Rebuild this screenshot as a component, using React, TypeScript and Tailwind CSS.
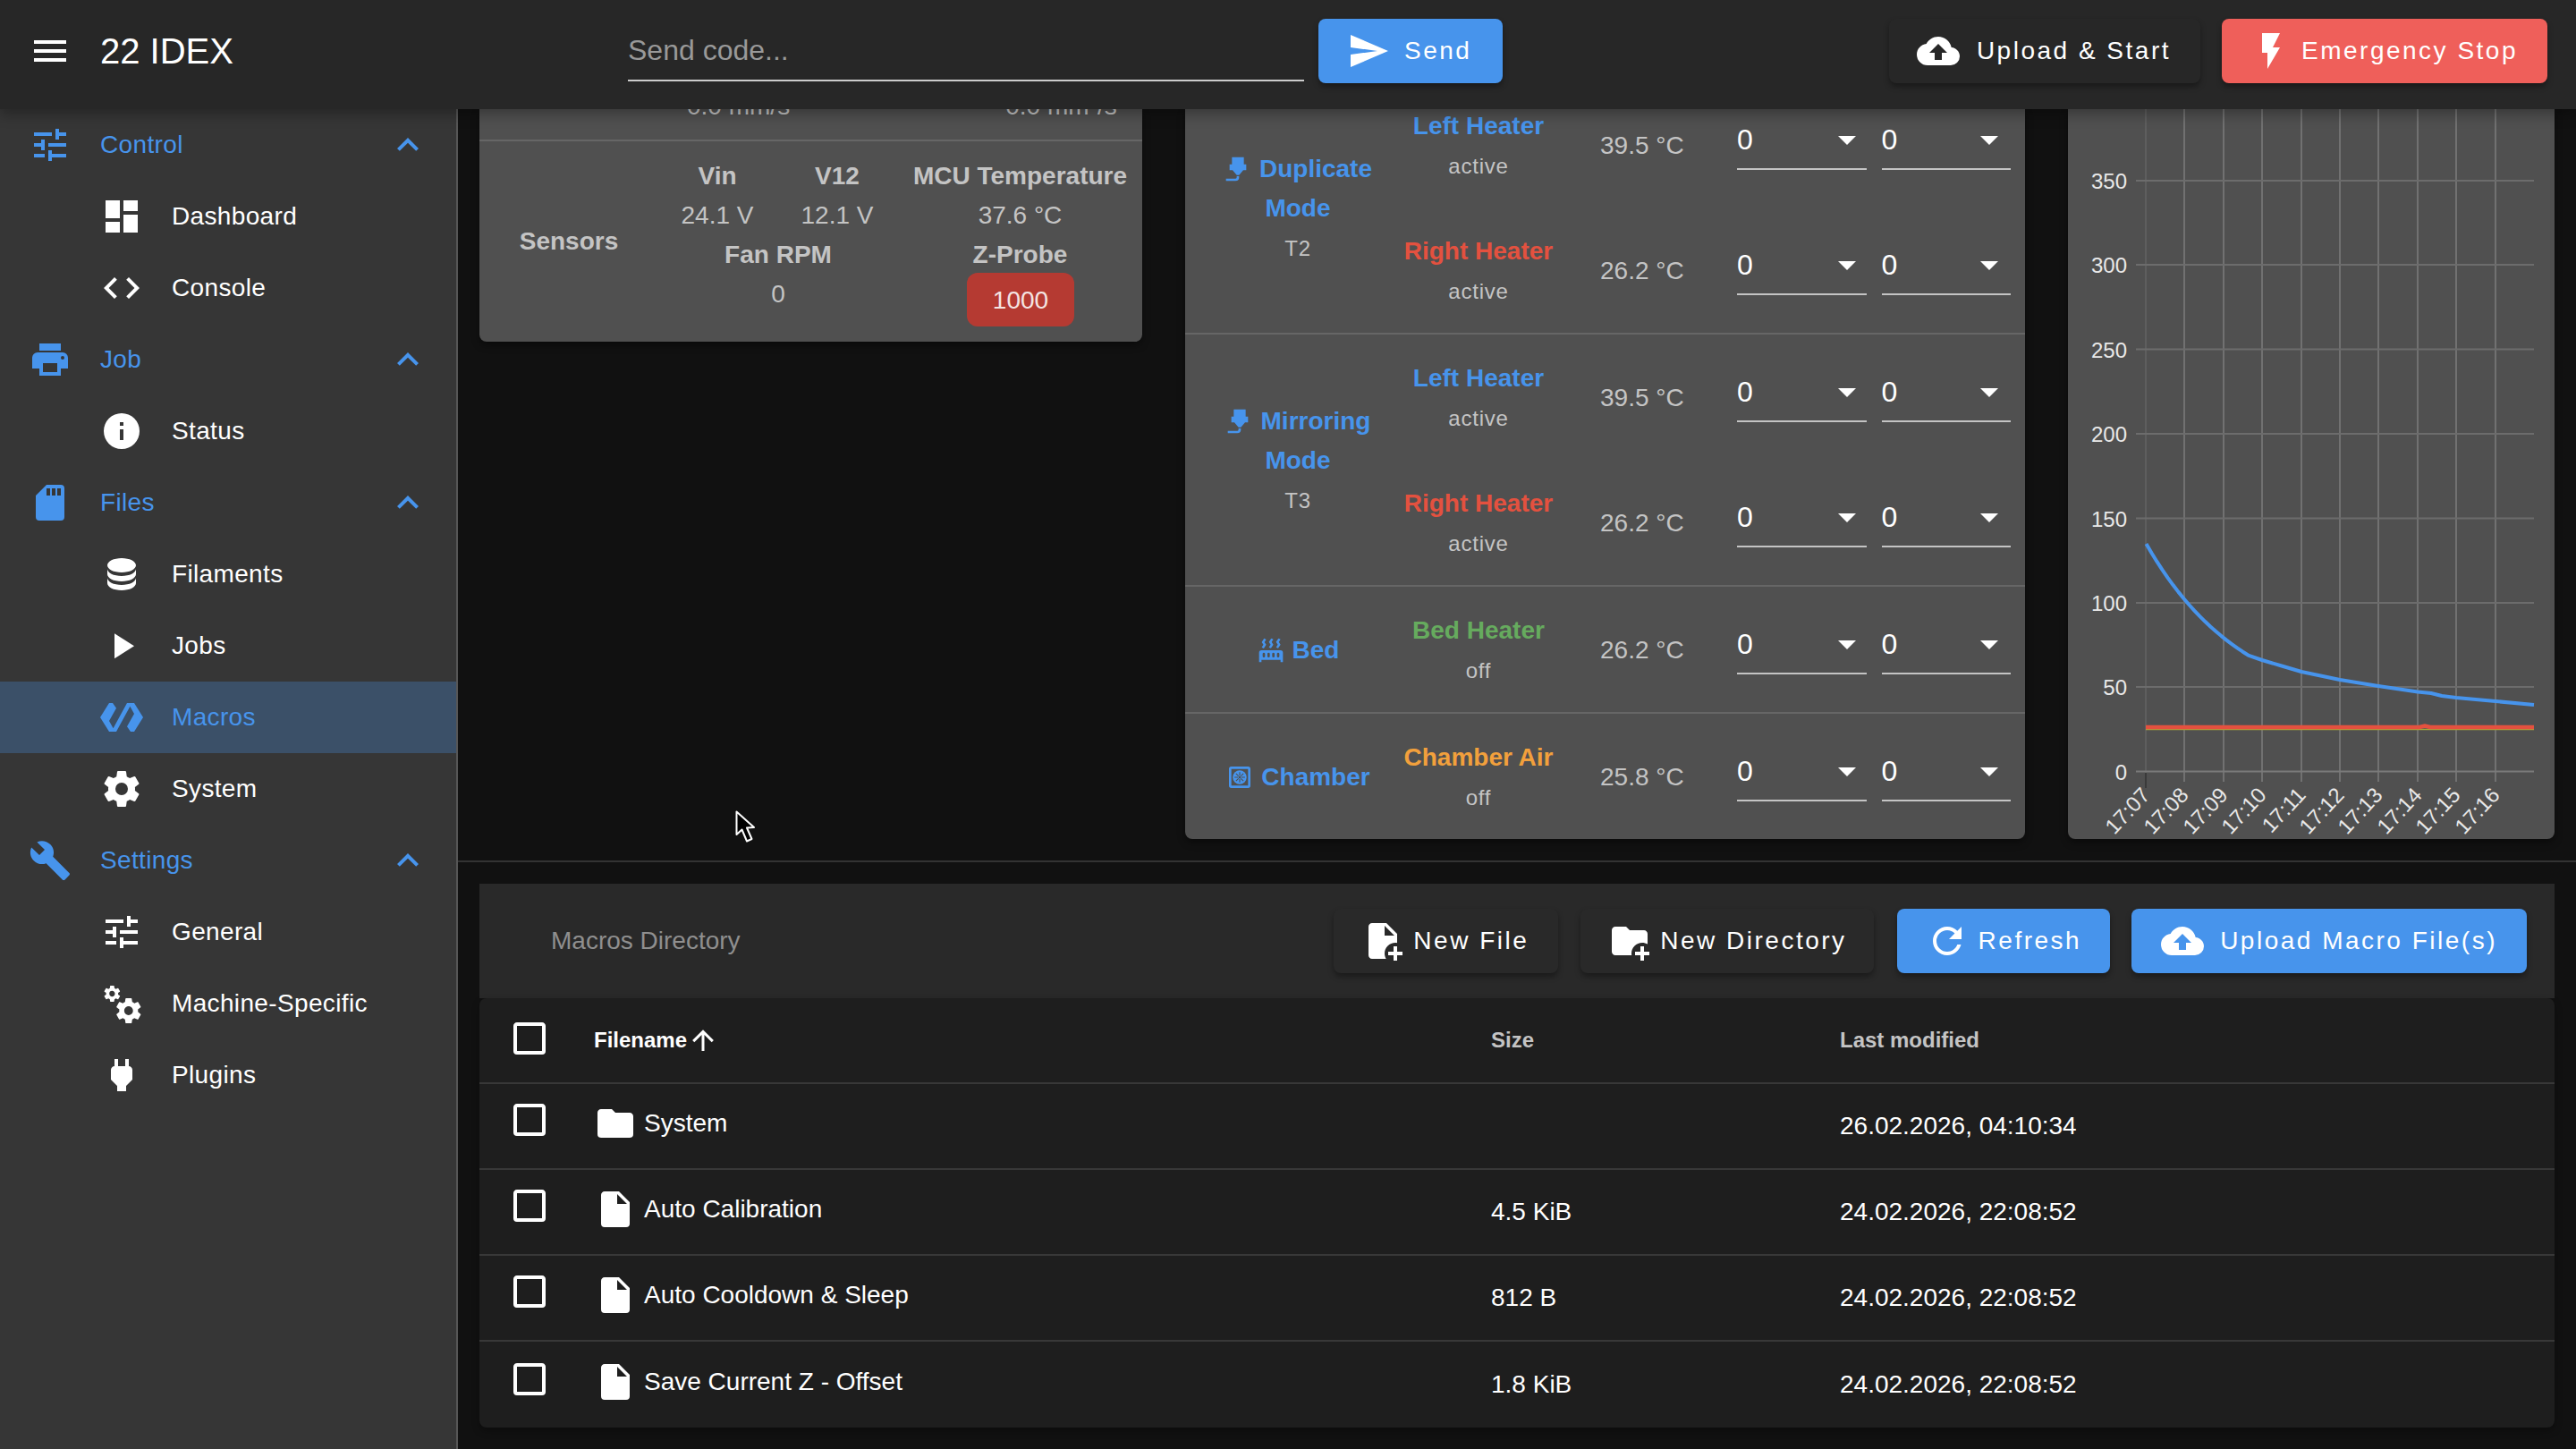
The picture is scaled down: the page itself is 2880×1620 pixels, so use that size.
import React from "react";

const P = {
  menu: "M3,6H21V8H3V6M3,11H21V13H3V11M3,16H21V18H3V16Z",
  tune: "M3,17V19H9V17H3M3,5V7H13V5H3M13,21V19H21V17H13V15H11V21H13M7,9V11H3V13H7V15H9V9H7M21,13V11H11V13H21M15,9H17V7H21V5H17V3H15V9Z",
  chevron: "M7.41,15.41L12,10.83L16.59,15.41L18,14L12,8L6,14L7.41,15.41Z",
  dashboard: "M13,3V9H21V3M13,21H21V11H13M3,21H11V15H3M3,13H11V3H3V13Z",
  code: "M14.6,16.6L19.2,12L14.6,7.4L16,6L22,12L16,18L14.6,16.6M9.4,16.6L4.8,12L9.4,7.4L8,6L2,12L8,18L9.4,16.6Z",
  printer: "M18,3H6V7H18M19,12A1,1 0 0,1 18,11A1,1 0 0,1 19,10A1,1 0 0,1 20,11A1,1 0 0,1 19,12M16,19H8V14H16M19,8H5A3,3 0 0,0 2,11V17H6V21H18V17H22V11A3,3 0 0,0 19,8Z",
  info: "M13,9H11V7H13M13,17H11V11H13M12,2A10,10 0 0,0 2,12A10,10 0 0,0 12,22A10,10 0 0,0 22,12A10,10 0 0,0 12,2Z",
  sd: "M18,8H16V4H18M15,8H13V4H15M12,8H10V4H12M18,2H10L4,8V20A2,2 0 0,0 6,22H18A2,2 0 0,0 20,20V4A2,2 0 0,0 18,2Z",
  database: "M12,3C7.58,3 4,4.79 4,7C4,9.21 7.58,11 12,11C16.42,11 20,9.21 20,7C20,4.79 16.42,3 12,3M4,9V12C4,14.21 7.58,16 12,16C16.42,16 20,14.21 20,12V9C20,11.21 16.42,13 12,13C7.58,13 4,11.21 4,9M4,14V17C4,19.21 7.58,21 12,21C16.42,21 20,19.21 20,17V14C20,16.21 16.42,18 12,18C7.58,18 4,16.21 4,14Z",
  play: "M8,5.14V19.14L19,12.14L8,5.14Z",
  polymer: "M19,4H15L7.3,18.1L5,14L9,6.9L7,4H5L0,12L5,20H9L16.7,5.9L19,10L15,17.1L17,20H19L24,12L19,4Z",
  cog: "M12,15.5A3.5,3.5 0 0,1 8.5,12A3.5,3.5 0 0,1 12,8.5A3.5,3.5 0 0,1 15.5,12A3.5,3.5 0 0,1 12,15.5M19.43,12.97C19.47,12.65 19.5,12.33 19.5,12C19.5,11.67 19.47,11.34 19.43,11L21.54,9.37C21.73,9.22 21.78,8.95 21.66,8.73L19.66,5.27C19.54,5.05 19.27,4.96 19.05,5.05L16.56,6.05C16.04,5.66 15.5,5.32 14.87,5.07L14.5,2.42C14.46,2.18 14.25,2 14,2H10C9.75,2 9.54,2.18 9.5,2.42L9.13,5.07C8.5,5.32 7.96,5.66 7.44,6.05L4.95,5.05C4.73,4.96 4.46,5.05 4.34,5.27L2.34,8.73C2.21,8.95 2.27,9.22 2.46,9.37L4.57,11C4.53,11.34 4.5,11.67 4.5,12C4.5,12.33 4.53,12.65 4.57,12.97L2.46,14.63C2.27,14.78 2.21,15.05 2.34,15.27L4.34,18.73C4.46,18.95 4.73,19.03 4.95,18.95L7.44,17.94C7.96,18.34 8.5,18.68 9.13,18.93L9.5,21.58C9.54,21.82 9.75,22 10,22H14C14.25,22 14.46,21.82 14.5,21.58L14.87,18.93C15.5,18.67 16.04,18.34 16.56,17.94L19.05,18.95C19.27,19.03 19.54,18.95 19.66,18.73L21.66,15.27C21.78,15.05 21.73,14.78 21.54,14.63L19.43,12.97Z",
  wrench: "M22.7,19L13.6,9.9C14.5,7.6 14,4.9 12.1,3C10.1,1 7.1,0.6 4.7,1.7L9,6L6,9L1.6,4.7C0.4,7.1 0.9,10.1 2.9,12.1C4.8,14 7.5,14.5 9.8,13.6L18.9,22.7C19.3,23.1 19.9,23.1 20.3,22.7L22.6,20.4C23.1,20 23.1,19.3 22.7,19Z",
  cogs: "M15.9,18.45C17.25,18.45 18.35,17.35 18.35,16C18.35,14.65 17.25,13.55 15.9,13.55C14.54,13.55 13.45,14.65 13.45,16C13.45,17.35 14.54,18.45 15.9,18.45M21.1,16.68L22.58,17.84C22.71,17.95 22.75,18.13 22.66,18.29L21.26,20.71C21.17,20.86 21,20.92 20.83,20.86L19.09,20.16C18.73,20.44 18.33,20.67 17.91,20.85L17.64,22.7C17.62,22.87 17.47,23 17.3,23H14.5C14.32,23 14.18,22.87 14.15,22.7L13.89,20.85C13.46,20.67 13.07,20.44 12.71,20.16L10.96,20.86C10.81,20.92 10.62,20.86 10.54,20.71L9.14,18.29C9.05,18.13 9.09,17.95 9.22,17.84L10.7,16.68L10.65,16L10.7,15.31L9.22,14.16C9.09,14.05 9.05,13.86 9.14,13.71L10.54,11.29C10.62,11.13 10.81,11.07 10.96,11.13L12.71,11.84C13.07,11.56 13.46,11.32 13.89,11.15L14.15,9.29C14.18,9.13 14.32,9 14.5,9H17.3C17.47,9 17.62,9.13 17.64,9.29L17.91,11.15C18.33,11.32 18.73,11.56 19.09,11.84L20.83,11.13C21,11.07 21.17,11.13 21.26,11.29L22.66,13.71C22.75,13.86 22.71,14.05 22.58,14.16L21.1,15.31L21.15,16L21.1,16.68M6.69,8.07C7.56,8.07 8.26,7.37 8.26,6.5C8.26,5.63 7.56,4.92 6.69,4.92A1.58,1.58 0 0,0 5.11,6.5C5.11,7.37 5.82,8.07 6.69,8.07M10.03,6.94L11,7.68C11.07,7.75 11.09,7.87 11.03,7.97L10.13,9.53C10.08,9.63 9.96,9.67 9.86,9.63L8.74,9.18L8,9.62L7.81,10.81C7.79,10.92 7.7,11 7.59,11H5.79C5.67,11 5.58,10.92 5.56,10.81L5.4,9.62L4.64,9.18L3.5,9.63C3.41,9.67 3.3,9.63 3.24,9.53L2.34,7.97C2.28,7.87 2.31,7.75 2.39,7.68L3.34,6.94L3.31,6.5L3.34,6.06L2.39,5.32C2.31,5.25 2.28,5.13 2.34,5.03L3.24,3.47C3.3,3.37 3.41,3.33 3.5,3.37L4.63,3.82L5.4,3.38L5.56,2.19C5.58,2.08 5.67,2 5.79,2H7.59C7.7,2 7.79,2.08 7.81,2.19L8,3.38L8.74,3.82L9.86,3.37C9.96,3.33 10.08,3.37 10.13,3.47L11.03,5.03C11.09,5.13 11.07,5.25 11,5.32L10.03,6.06L10.05,6.5L10.03,6.94Z",
  plug: "M16,7V3H14V7H10V3H8V7H8C7,7 6,8 6,9V14.5L9.5,18V21H14.5V18L18,14.5V9C18,8 17,7 16,7Z",
  send: "M2,21L23,12L2,3V10L17,12L2,14V21Z",
  upload: "M14,13V17H10V13H7L12,8L17,13M19.35,10.03C18.67,6.59 15.64,4 12,4C9.11,4 6.6,5.64 5.35,8.03C2.34,8.36 0,10.9 0,14A6,6 0 0,0 6,20H19A5,5 0 0,0 24,15C24,12.36 21.95,10.22 19.35,10.03Z",
  flash: "M7,2V13H10V22L17,10H13L17,2H7Z",
  file: "M13,9V3.5L18.5,9M6,2C4.89,2 4,2.89 4,4V20A2,2 0 0,0 6,22H18A2,2 0 0,0 20,20V8L14,2H6Z",
  folder: "M10,4H4C2.89,4 2,4.89 2,6V18A2,2 0 0,0 4,20H20A2,2 0 0,0 22,18V8C22,6.89 21.1,6 20,6H12L10,4Z",
  filePlus: "M13.81 22H6C4.89 22 4 21.11 4 20V4C4 2.9 4.89 2 6 2H14L20 8V13.09C19.67 13.04 19.34 13 19 13C15.69 13 13 15.69 13 19C13 20.06 13.28 21.09 13.81 22M13 9H18.5L13 3.5V9M20 18V15H18V18H15V20H18V23H20V20H23V18H20Z",
  folderPlus: "M13 19C13 19.34 13.04 19.67 13.09 20H4C2.9 20 2 19.11 2 18V6C2 4.89 2.89 4 4 4H10L12 6H20C21.1 6 22 6.89 22 8V13.81C21.12 13.3 20.1 13 19 13C15.69 13 13 15.69 13 19M20 18V15H18V18H15V20H18V23H20V20H23V18H20Z",
  refresh: "M17.65,6.35C16.2,4.9 14.21,4 12,4A8,8 0 0,0 4,12A8,8 0 0,0 12,20C15.73,20 18.84,17.45 19.73,14H17.65C16.83,16.33 14.61,18 12,18A6,6 0 0,1 6,12A6,6 0 0,1 12,6C13.66,6 15.14,6.69 16.22,7.78L13,11H20V4L17.65,6.35Z",
  checkbox: "M19,3H5C3.89,3 3,3.89 3,5V19A2,2 0 0,0 5,21H19A2,2 0 0,0 21,19V5C21,3.89 20.1,3 19,3M19,5V19H5V5H19Z",
  arrowUp: "M13,20H11V8L5.5,13.5L4.08,12.08L12,4.16L19.92,12.08L18.5,13.5L13,8V20Z",
  nozzle: "M7,2H17V8H19V13H16.5L13,17H11L7.5,13H5V8H7V2M10,22H2V20H10A1,1 0 0,0 11,19V18H13V19A3,3 0 0,1 10,22Z",
  radiator: "M7.95,3L6.53,5.19L7.95,7.4H7.94L5.95,10.5L4.22,9.6L5.64,7.39L4.22,5.19L6.22,2.09L7.95,3M13.95,2.89L12.53,5.1L13.95,7.3L13.94,7.31L11.95,10.4L10.22,9.5L11.64,7.3L10.22,5.1L12.22,2L13.95,2.89M20,2.89L18.56,5.1L20,7.3V7.31L18,10.4L16.25,9.5L17.67,7.3L16.25,5.1L18.25,2L20,2.89M2,22V14A2,2 0 0,1 4,12H20A2,2 0 0,1 22,14V22H20V20H4V22H2M6,14A1,1 0 0,0 5,15V17A1,1 0 0,0 6,18A1,1 0 0,0 7,17V15A1,1 0 0,0 6,14M10,14A1,1 0 0,0 9,15V17A1,1 0 0,0 10,18A1,1 0 0,0 11,17V15A1,1 0 0,0 10,14M14,14A1,1 0 0,0 13,15V17A1,1 0 0,0 14,18A1,1 0 0,0 15,17V15A1,1 0 0,0 14,14M18,14A1,1 0 0,0 17,15V17A1,1 0 0,0 18,18A1,1 0 0,0 19,17V15A1,1 0 0,0 18,14Z",
  menuDown: "M7,10L12,15L17,10H7Z",
};

function Icon({ d, size = 48, className = "" }: { d: string; size?: number; className?: string }) {
  return (
    <svg viewBox="0 0 24 24" width={size} height={size} fill="currentColor" className={`shrink-0 ${className}`}>
      <path d={d} />
    </svg>
  );
}

function ChamberIcon() {
  return (
    <svg viewBox="0 0 24 24" width={32} height={32} className="shrink-0" fill="none" stroke="currentColor">
      <rect x="4" y="4" width="16" height="16" rx="1" strokeWidth="2" />
      <circle cx="12" cy="12" r="5.8" fill="currentColor" stroke="none" />
      <circle cx="12" cy="12" r="1" fill="#505050" stroke="none" />
      <path d="M12 7.6V10.6M12 13.4V16.4M7.6 12H10.6M13.4 12H16.4M8.9 8.9L11 11M13 13L15.1 15.1M15.1 8.9L13 11M11 13L8.9 15.1" stroke="#505050" strokeWidth="0.8" />
    </svg>
  );
}

const BLUE = "text-[#4794ec]";

function GroupRow({ icon, label }: { icon: string; label: string }) {
  return (
    <div className={`flex h-[80px] items-center pl-[32px] pr-[30px] ${BLUE}`}>
      <Icon d={icon} />
      <span className="ml-[32px] flex-1 text-[28px] tracking-[0.35px]">{label}</span>
      <Icon d={P.chevron} />
    </div>
  );
}

function ChildRow({ icon, label, active }: { icon: string; label: string; active?: boolean }) {
  return (
    <div className={`flex h-[80px] items-center pl-[112px] ${active ? `bg-[#3b5068] ${BLUE}` : "text-white"}`}>
      <Icon d={icon} />
      <span className="ml-[32px] text-[28px] tracking-[0.35px]">{label}</span>
    </div>
  );
}

function Sidebar() {
  return (
    <aside className="h-full w-[512px] shrink-0 border-r-2 border-[#565656] bg-[#363636]">
      <GroupRow icon={P.tune} label="Control" />
      <ChildRow icon={P.dashboard} label="Dashboard" />
      <ChildRow icon={P.code} label="Console" />
      <GroupRow icon={P.printer} label="Job" />
      <ChildRow icon={P.info} label="Status" />
      <GroupRow icon={P.sd} label="Files" />
      <ChildRow icon={P.database} label="Filaments" />
      <ChildRow icon={P.play} label="Jobs" />
      <ChildRow icon={P.polymer} label="Macros" active />
      <ChildRow icon={P.cog} label="System" />
      <GroupRow icon={P.wrench} label="Settings" />
      <ChildRow icon={P.tune} label="General" />
      <ChildRow icon={P.cogs} label="Machine-Specific" />
      <ChildRow icon={P.plug} label="Plugins" />
    </aside>
  );
}

function Btn({
  icon,
  label,
  color,
  className = "",
  gap = "mr-[16px]",
}: {
  icon: string;
  label: string;
  color: string;
  className?: string;
  gap?: string;
}) {
  return (
    <div
      className={`flex h-[72px] items-center rounded-[8px] text-[28px] tracking-[2.5px] text-white shadow-[0_4px_6px_rgba(0,0,0,0.35)] ${color} ${className}`}
    >
      <Icon d={icon} className={gap} />
      <span>{label}</span>
    </div>
  );
}

function Header() {
  return (
    <header className="relative z-10 flex h-[122px] shrink-0 items-center bg-[#272727] pb-[8px] pl-[32px] pr-[32px] shadow-[0_6px_14px_rgba(0,0,0,0.3)]">
      <Icon d={P.menu} className="text-white" />
      <span className="ml-[32px] w-[590px] text-[40px] leading-none text-white">22 IDEX</span>
      <div className="flex h-[68px] w-[756px] items-center border-b-2 border-[#cccccc] text-[32px] text-[#999999]">
        Send code...
      </div>
      <Btn icon={P.send} label="Send" color="bg-[#4794ec]" className="ml-[16px] pl-[32px] pr-[35px]" />
      <div className="ml-auto flex gap-[24px]">
        <Btn icon={P.upload} label="Upload & Start" color="bg-[#272727]" className="pl-[31px] pr-[33px]" gap="mr-[19px]" />
        <Btn icon={P.flash} label="Emergency Stop" color="bg-[#ef5f5a]" className="pl-[31px] pr-[33px]" gap="mr-[10px]" />
      </div>
    </header>
  );
}

function SensorsCard() {
  const muted = "text-[#c4c4c4]";
  const th = `text-center text-[28px] font-bold leading-[44px] ${muted}`;
  const td = `text-center text-[28px] leading-[44px] ${muted}`;
  return (
    <div className="h-[260px] w-[741px] shrink-0 overflow-hidden rounded-b-[8px] bg-[#505050] shadow-[0_4px_8px_rgba(0,0,0,0.4)]">
      <div className={`flex h-[34px] items-end overflow-hidden pb-[15px] text-[28px] leading-[44px] ${muted}`}>
        <span className="ml-[232px] w-[115px] shrink-0 whitespace-nowrap text-center">0.0 mm/s</span>
        <span className="ml-[241px] w-[125px] shrink-0 whitespace-nowrap text-center">0.0 mm³/s</span>
      </div>
      <div className="flex h-[226px] border-t-2 border-[#666666]">
        <div className={`flex w-[200px] items-center justify-center text-[28px] font-bold ${muted}`}>Sensors</div>
        <div className="grid grid-cols-[132px_136px_273px] content-start pt-[17px]">
          <div className={th}>Vin</div>
          <div className={th}>V12</div>
          <div className={`${th} whitespace-nowrap`}>MCU Temperature</div>
          <div className={td}>24.1 V</div>
          <div className={td}>12.1 V</div>
          <div className={td}>37.6 °C</div>
          <div className={`${th} col-span-2`}>Fan RPM</div>
          <div className={th}>Z-Probe</div>
          <div className={`${td} col-span-2`}>0</div>
          <div className="flex justify-center pl-[1px]">
            <div className="-mt-[2px] flex h-[60px] w-[120px] items-center justify-center rounded-[12px] bg-[#b53a32] pt-[2px] text-[28px] text-[#f4e4e2]">1000</div>
          </div>
        </div>
      </div>
    </div>
  );
}

function Sel({ arrow = "" }: { arrow?: string }) {
  return (
    <div className="flex h-[58px] flex-1 items-start justify-between border-b-2 border-[#c4c4c4]">
      <span className="text-[32px] leading-[48px] text-white">0</span>
      <Icon d={P.menuDown} className={`text-white ${arrow}`} />
    </div>
  );
}

function HeaterRow({ name, color, sub, temp }: { name: string; color: string; sub: string; temp: string }) {
  return (
    <div className="flex h-[140px]">
      <div className="flex w-[176px] flex-col items-center pt-[27px]">
        <div className={`whitespace-nowrap text-[28px] font-bold leading-[44px] ${color}`}>{name}</div>
        <div className="text-[24px] leading-[46px] tracking-[0.8px] text-[#c4c4c4]">{sub}</div>
      </div>
      <div className="w-[201px] pl-[48px] pt-[49px] text-[28px] leading-[44px] text-[#c4c4c4]">{temp}</div>
      <div className="flex w-[306px] gap-[17px] pt-[40px]">
        <Sel arrow="-mr-[2px]" />
        <Sel />
      </div>
    </div>
  );
}

function ToolName({ icon, lines, sub }: { icon: React.ReactNode; lines: string[]; sub?: string }) {
  return (
    <div className={`flex w-[240px] shrink-0 flex-col items-center justify-center pl-[12px] ${sub ? "pt-[3px]" : "pt-[1px]"} ${BLUE}`}>
      <div className="flex items-center gap-[8px] whitespace-nowrap text-[28px] font-bold leading-[44px]">
        {icon}
        {lines[0]}
      </div>
      {lines[1] && <div className="text-[28px] font-bold leading-[44px]">{lines[1]}</div>}
      {sub && <div className="text-[24px] leading-[46px] tracking-[0.8px] text-[#c4c4c4]">{sub}</div>}
    </div>
  );
}

function HeatersCard() {
  const b = "border-b-2 border-[#666666]";
  const red = "text-[#e4513f]";
  return (
    <div className="flex w-[939px] shrink-0 flex-col justify-end overflow-hidden rounded-b-[8px] bg-[#505050] shadow-[0_4px_8px_rgba(0,0,0,0.4)]">
      <div className={`flex shrink-0 ${b}`}>
        <ToolName icon={<Icon d={P.nozzle} size={32} />} lines={["Duplicate", "Mode"]} sub="T2" />
        <div>
          <HeaterRow name="Left Heater" color={BLUE} sub="active" temp="39.5 °C" />
          <HeaterRow name="Right Heater" color={red} sub="active" temp="26.2 °C" />
        </div>
      </div>
      <div className={`flex shrink-0 ${b}`}>
        <ToolName icon={<Icon d={P.nozzle} size={32} />} lines={["Mirroring", "Mode"]} sub="T3" />
        <div>
          <HeaterRow name="Left Heater" color={BLUE} sub="active" temp="39.5 °C" />
          <HeaterRow name="Right Heater" color={red} sub="active" temp="26.2 °C" />
        </div>
      </div>
      <div className={`flex shrink-0 ${b}`}>
        <ToolName icon={<Icon d={P.radiator} size={32} />} lines={["Bed"]} />
        <HeaterRow name="Bed Heater" color="text-[#66ab5e]" sub="off" temp="26.2 °C" />
      </div>
      <div className="flex shrink-0">
        <ToolName icon={<ChamberIcon />} lines={["Chamber"]} />
        <HeaterRow name="Chamber Air" color="text-[#f2a03c]" sub="off" temp="25.8 °C" />
      </div>
    </div>
  );
}

function Chart() {
  const ox = 2312;
  const oy = 122;
  const ys = [
    [350, 202],
    [300, 296],
    [250, 390.5],
    [200, 485],
    [150, 579.5],
    [100, 674],
    [50, 768],
    [0, 862.5],
  ];
  const xs = [2399, 2442, 2486, 2529, 2573, 2616, 2659, 2703, 2746, 2790];
  const labels = ["17:07", "17:08", "17:09", "17:10", "17:11", "17:12", "17:13", "17:14", "17:15", "17:16"];
  const head = Array.from({ length: 20 }, (_, i) => {
    const t = i * 6;
    return [2399.5 + t, 608 + 193 * (1 - Math.exp(-t / 110))];
  });
  const blue = [
    ...head,
    [2529, 738],
    [2551, 744.5],
    [2573, 751],
    [2616, 760],
    [2659, 767],
    [2703, 773.6],
    [2718, 775],
    [2730, 778],
    [2746, 780],
    [2790, 784],
    [2833, 788],
  ];
  return (
    <div className="w-[544px] shrink-0 overflow-hidden rounded-b-[8px] bg-[#505050] shadow-[0_4px_8px_rgba(0,0,0,0.4)]">
      <svg width={544} height={816} viewBox={`${ox} ${oy} 544 816`} className="block">
        {xs.map((x) => (
          <line key={x} x1={x} x2={x} y1={oy} y2={874} stroke={x === 2399 ? "#5e5e5e" : "#717171"} strokeWidth={2} />
        ))}
        {ys.map(([v, y]) => (
          <g key={v}>
            <line x1={2388} x2={2833} y1={y} y2={y} stroke={v === 0 ? "#7a7a7a" : "#6c6c6c"} strokeWidth={2} />
            <text x={2378} y={y + 9} textAnchor="end" fontSize={24} fill="#e8e8e8" fontFamily="'Liberation Sans', sans-serif">
              {v}
            </text>
          </g>
        ))}
        <line x1={2399} x2={2399} y1={864} y2={881} stroke="#3a3a3a" strokeWidth={2} />
        <polyline points={blue.map((p) => p.join(",")).join(" ")} fill="none" stroke="#4794ec" strokeWidth={4} strokeLinejoin="round" />
        <line x1={2399} x2={2833} y1={815.5} y2={815.5} stroke="#a8a83a" strokeWidth={1.5} />
        <polyline points="2399,813 2705,813 2711,811.5 2717,813 2833,813" fill="none" stroke="#e4513f" strokeWidth={4.5} />
        {labels.map((l, i) => (
          <text
            key={l}
            x={xs[i] + 6}
            y={890}
            textAnchor="end"
            fontSize={24}
            fill="#e8e8e8"
            fontFamily="'Liberation Sans', sans-serif"
            transform={`rotate(-47 ${xs[i] + 6} 890)`}
          >
            {l}
          </text>
        ))}
      </svg>
    </div>
  );
}

function FileRow({ icon, name, size, date, last }: { icon: string; name: string; size: string; date: string; last?: boolean }) {
  return (
    <div className={`flex h-[96px] items-center text-[28px] text-white ${last ? "" : "border-b-2 border-[#383838]"}`}>
      <div className={`flex w-[128px] justify-center pr-[16px] ${last ? "mb-[12px]" : "mb-[14px]"}`}>
        <Icon d={P.checkbox} />
      </div>
      <div className="mb-[6px] flex w-[1003px] items-center">
        <Icon d={icon} />
        <span className="ml-[8px]">{name}</span>
      </div>
      <div className="w-[390px]">{size}</div>
      <div>{date}</div>
    </div>
  );
}

function Files() {
  return (
    <div className="mx-[24px] mt-[24px]">
      <div className="flex h-[128px] items-center bg-[#292929] pl-[80px] pr-[31px]">
        <span className="flex-1 text-[28px] text-[#8f8f8f]">Macros Directory</span>
        <Btn icon={P.filePlus} label="New File" color="bg-[#292929]" className="pl-[31px] pr-[33px]" gap="mr-[10px]" />
        <Btn icon={P.folderPlus} label="New Directory" color="bg-[#292929]" className="ml-[25px] pl-[31px] pr-[30px]" gap="mr-[10px]" />
        <Btn icon={P.refresh} label="Refresh" color="bg-[#4794ec]" className="ml-[26px] pl-[32px] pr-[32px]" gap="mr-[11px]" />
        <Btn icon={P.upload} label="Upload Macro File(s)" color="bg-[#4794ec]" className="ml-[24px] pl-[33px] pr-[33px]" gap="mr-[18px]" />
      </div>
      <div className="rounded-[8px] bg-[#1e1e1e] shadow-[0_4px_8px_rgba(0,0,0,0.3)]">
        <div className="flex h-[96px] items-center border-b-2 border-[#383838] text-[24px] font-bold text-[#c4c4c4]">
          <div className="flex w-[128px] justify-center pr-[16px] text-white">
            <Icon d={P.checkbox} className="mb-[4px]" />
          </div>
          <div className="flex w-[1003px] items-center text-white">
            Filename
            <Icon d={P.arrowUp} size={36} />
          </div>
          <div className="w-[390px]">Size</div>
          <div>Last modified</div>
        </div>
        <FileRow icon={P.folder} name="System" size="" date="26.02.2026, 04:10:34" />
        <FileRow icon={P.file} name="Auto Calibration" size="4.5 KiB" date="24.02.2026, 22:08:52" />
        <FileRow icon={P.file} name="Auto Cooldown & Sleep" size="812 B" date="24.02.2026, 22:08:52" />
        <FileRow icon={P.file} name="Save Current Z - Offset" size="1.8 KiB" date="24.02.2026, 22:08:52" last />
      </div>
    </div>
  );
}

function Cursor() {
  return (
    <svg className="absolute left-[818px] top-[904px] z-20" width="32" height="42" viewBox="0 0 32 42">
      <path d="M5.5 3.5L5.5 29L11.5 23.5L17 36.5L22.5 34L17 21.5L25 21Z" fill="#000" stroke="#fff" strokeWidth="2" strokeLinejoin="round" />
    </svg>
  );
}

export default function App() {
  return (
    <div className="relative flex h-[1620px] w-[2880px] flex-col overflow-hidden bg-[#111111] [font-family:'Liberation_Sans',Arial,sans-serif]">
      <Header />
      <div className="flex min-h-0 flex-1">
        <Sidebar />
        <main className="min-w-0 flex-1">
          <div className="flex h-[816px] items-start gap-[48px] pl-[24px]">
            <SensorsCard />
            <div className="flex h-[816px] gap-[48px]">
              <HeatersCard />
              <Chart />
            </div>
          </div>
          <div className="mt-[24px] h-[2px] bg-[#333333]" />
          <Files />
        </main>
      </div>
      <Cursor />
    </div>
  );
}
